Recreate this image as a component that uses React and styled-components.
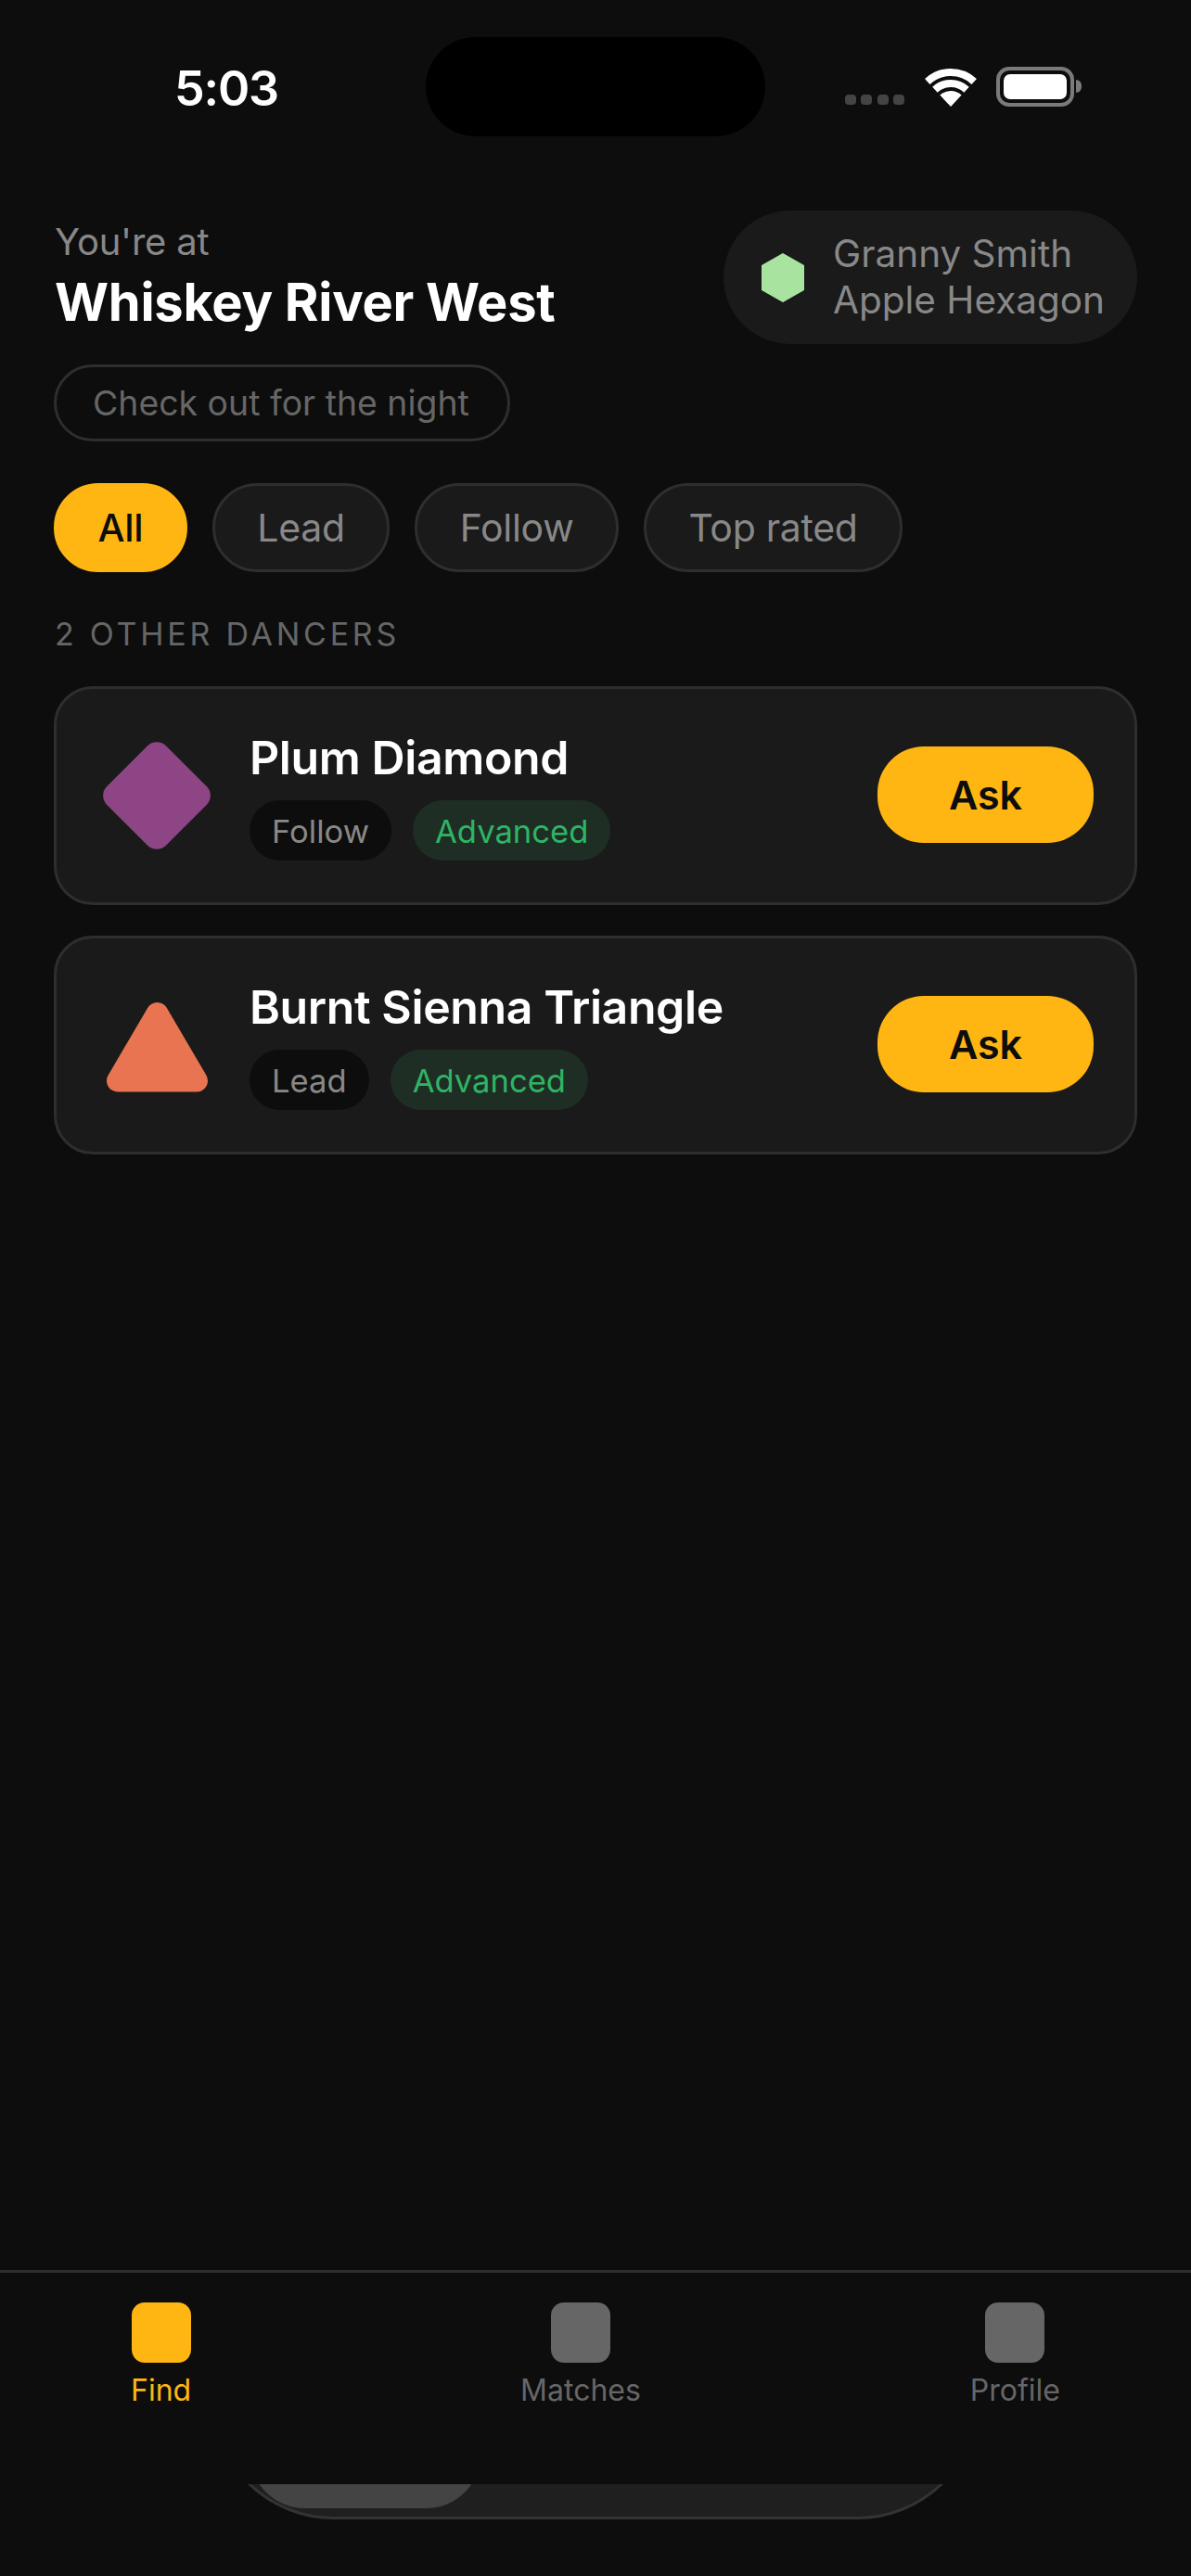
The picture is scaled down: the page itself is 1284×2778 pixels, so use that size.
import styled, { createGlobalStyle } from "styled-components"

const GlobalStyle = createGlobalStyle`
  html, body {
    margin: 0;
    padding: 0;
    background: #0d0d0d;
  }
  * {
    box-sizing: border-box;
  }
`

const Page = styled.div`
  width: 1284px;
  height: 2778px;
  display: flex;
  flex-direction: column;
  overflow: hidden;
  background: #0d0d0d;
  font-family: Inter, "Liberation Sans", sans-serif;
`

const StatusBar = styled.div`
  display: grid;
  grid-template-columns: 459px 366px 1fr;
  height: 107px;
  margin-top: 40px;
`

const Time = styled.div`
  padding-left: 188px;
  margin-top: 25px;
  font-size: 52px;
  line-height: 62px;
  font-weight: 600;
  letter-spacing: -1.2px;
  color: #fff;
`

const Island = styled.div`
  background: #000;
  border-radius: 54px;
`

const StatusIcons = styled.div`
  display: flex;
  align-items: flex-end;
  height: 43px;
  margin-top: 32px;
  padding-left: 86px;
`

const Signal = styled.div`
  display: flex;
  gap: 5.33px;
  margin-bottom: 2px;
  margin-right: 22px;
`

const SignalDot = styled.span`
  width: 12px;
  height: 11px;
  border-radius: 4px;
  background: #444;
`

const Battery = styled.div`
  position: relative;
  width: 84px;
  height: 43px;
  margin-left: 21px;
  padding: 4px;
  border: 4px solid #7a7a7a;
  border-radius: 14px;

  &::after {
    content: "";
    position: absolute;
    top: 10px;
    right: -12px;
    width: 6px;
    height: 14px;
    border-radius: 0 6px 6px 0;
    background: #7a7a7a;
  }
`

const BatteryFill = styled.div`
  width: 100%;
  height: 100%;
  border-radius: 7px;
  background: #fff;
`

const Content = styled.main`
  flex: 1;
  display: flex;
  flex-direction: column;
  padding: 80px 58px 0;
`

const HeaderRow = styled.div`
  display: flex;
  justify-content: space-between;
  align-items: flex-start;
`

const Venue = styled.div`
  padding: 10px 0 0 1px;
`

const VenueLabel = styled.div`
  font-size: 40px;
  line-height: 48px;
  letter-spacing: -0.2px;
  color: #888;
`

const VenueName = styled.h1`
  margin: 6px 0 0;
  font-size: 56px;
  line-height: 70px;
  font-weight: 700;
  letter-spacing: -0.28px;
  color: #fff;
`

const ProfilePill = styled.div`
  display: flex;
  align-items: center;
  gap: 31px;
  width: 446px;
  height: 144px;
  padding-left: 41px;
  border-radius: 72px;
  background: #1a1a1a;
`

const ProfileName = styled.div`
  font-size: 40.5px;
  line-height: 50px;
  color: #888;
`

const CheckOut = styled.button`
  align-self: flex-start;
  height: 83px;
  margin-top: 22px;
  padding: 0 41px 0 39px;
  border: 3px solid #2e2e2e;
  border-radius: 42px;
  background: transparent;
  font-family: inherit;
  font-size: 37.4px;
  color: #666;
`

const Filters = styled.div`
  display: flex;
  gap: 27px;
  margin-top: 45px;
`

const Filter = styled.button`
  height: 96px;
  padding: 0 ${p => (p.$active ? 44.5 : 45.5)}px;
  border: 3px solid ${p => (p.$active ? "#ffb612" : "#2e2e2e")};
  border-radius: 48px;
  background: ${p => (p.$active ? "#ffb612" : "#1a1a1a")};
  font-family: inherit;
  font-size: 41px;
  font-weight: ${p => (p.$active ? 500 : 400)};
  letter-spacing: -0.3px;
  color: ${p => (p.$active ? "#0d0d0d" : "#888")};
`

const SectionTitle = styled.h2`
  margin: 46px 0 0 1px;
  font-size: 34px;
  line-height: 42px;
  font-weight: 400;
  letter-spacing: 3.75px;
  color: #666;
`

const CardList = styled.div`
  display: flex;
  flex-direction: column;
  gap: 33px;
  margin-top: 35px;
`

const Card = styled.div`
  display: flex;
  align-items: center;
  height: 236px;
  padding: 0 44px;
  border: 3px solid #2e2e2e;
  border-radius: 42px;
  background: #1a1a1a;
`

const Shape = styled.svg`
  flex-shrink: 0;
  width: 128px;
  height: 128px;
  margin-right: 36px;
`

const DancerInfo = styled.div`
  flex: 1;
`

const DancerName = styled.div`
  font-size: 50px;
  line-height: 58px;
  font-weight: 600;
  letter-spacing: -0.4px;
  color: #fff;
`

const Tags = styled.div`
  display: flex;
  gap: 23px;
  margin-top: 17px;
`

const Tag = styled.span`
  display: flex;
  align-items: center;
  height: 65px;
  padding: 0 24px;
  border-radius: 33px;
  background: ${p => (p.$level ? "#1e2e24" : "#0d0d0d")};
  font-size: 34.6px;
  color: ${p => (p.$level ? "#2fb464" : "#888")};
`

const AskButton = styled.button`
  flex-shrink: 0;
  width: 233px;
  height: 104px;
  margin-bottom: 2px;
  border: 0;
  border-radius: 50px;
  background: #ffb612;
  font-family: inherit;
  font-size: 43px;
  font-weight: 600;
  color: #0d0d0d;
`

const TabBar = styled.nav`
  display: flex;
  justify-content: space-between;
  height: 231px;
  padding: 32px 141px 0;
  border-top: 3px solid #2e2e2e;
`

const TabItem = styled.div`
  display: flex;
  flex-direction: column;
  align-items: center;
  gap: 9px;
  font-size: 32px;
  line-height: 42px;
  color: ${p => (p.$active ? "#ffb612" : "#666")};
`

const TabIcon = styled.div`
  width: 64px;
  height: 65px;
  border-radius: 14px;
  background: ${p => (p.$active ? "#ffb612" : "#666")};
`

const HomeClip = styled.div`
  display: flex;
  justify-content: center;
  align-items: flex-end;
  height: 38px;
  overflow: hidden;
`

const HomeSheet = styled.div`
  flex-shrink: 0;
  display: flex;
  align-items: flex-end;
  width: 830px;
  height: 300px;
  padding: 0 0 9px 39px;
  border: 3px solid #333;
  border-radius: 133px;
  background: #1f1f1f;
`

const HomeThumb = styled.div`
  width: 250px;
  height: 200px;
  border-radius: 60px;
  background: #444;
`

const HomeSpace = styled.div`
  height: 61px;
`

const dancers = [
  { name: "Plum Diamond", role: "Follow", level: "Advanced", shape: "diamond" },
  { name: "Burnt Sienna Triangle", role: "Lead", level: "Advanced", shape: "triangle" },
]

function DancerShape({ shape }) {
  return (
    <Shape viewBox="0 0 128 128">
      {shape === "diamond" ? (
        <rect x="19" y="19" width="90" height="90" rx="14" fill="#8e4585" transform="rotate(45 64 64)" />
      ) : (
        <polygon
          points="64.5,30 22,102.5 107,102.5"
          fill="#e97451"
          stroke="#e97451"
          strokeWidth="24"
          strokeLinejoin="round"
        />
      )}
    </Shape>
  )
}

export default function App() {
  return (
    <Page>
      <GlobalStyle />
      <StatusBar>
        <Time>5:03</Time>
        <Island />
        <StatusIcons>
          <Signal>
            <SignalDot />
            <SignalDot />
            <SignalDot />
            <SignalDot />
          </Signal>
          <svg width="56" height="41" viewBox="0 0 56 41" fill="none">
            <path d="M2.8 13.95A37 37 0 0 1 53.2 13.95" stroke="#fff" strokeWidth="8" />
            <path d="M10.95 22.7A25 25 0 0 1 45.05 22.7" stroke="#fff" strokeWidth="8" />
            <path d="M28 41L16.4 28.6A17 17 0 0 1 39.6 28.6Z" fill="#fff" />
          </svg>
          <Battery>
            <BatteryFill />
          </Battery>
        </StatusIcons>
      </StatusBar>

      <Content>
        <HeaderRow>
          <Venue>
            <VenueLabel>You're at</VenueLabel>
            <VenueName>Whiskey River West</VenueName>
          </Venue>
          <ProfilePill>
            <svg width="46" height="53" viewBox="0 0 46 53">
              <polygon
                points="23,1 45,13.5 45,39.5 23,52 1,39.5 1,13.5"
                fill="#a8e4a0"
                stroke="#a8e4a0"
                strokeWidth="2"
                strokeLinejoin="round"
              />
            </svg>
            <ProfileName>
              Granny Smith
              <br />
              Apple Hexagon
            </ProfileName>
          </ProfilePill>
        </HeaderRow>

        <CheckOut>Check out for the night</CheckOut>

        <Filters>
          <Filter $active>All</Filter>
          <Filter>Lead</Filter>
          <Filter>Follow</Filter>
          <Filter>Top rated</Filter>
        </Filters>

        <SectionTitle>2 OTHER DANCERS</SectionTitle>

        <CardList>
          {dancers.map(d => (
            <Card key={d.name}>
              <DancerShape shape={d.shape} />
              <DancerInfo>
                <DancerName>{d.name}</DancerName>
                <Tags>
                  <Tag>{d.role}</Tag>
                  <Tag $level>{d.level}</Tag>
                </Tags>
              </DancerInfo>
              <AskButton>Ask</AskButton>
            </Card>
          ))}
        </CardList>
      </Content>

      <TabBar>
        <TabItem $active>
          <TabIcon $active />
          Find
        </TabItem>
        <TabItem>
          <TabIcon />
          Matches
        </TabItem>
        <TabItem>
          <TabIcon />
          Profile
        </TabItem>
      </TabBar>

      <HomeClip>
        <HomeSheet>
          <HomeThumb />
        </HomeSheet>
      </HomeClip>
      <HomeSpace />
    </Page>
  )
}
